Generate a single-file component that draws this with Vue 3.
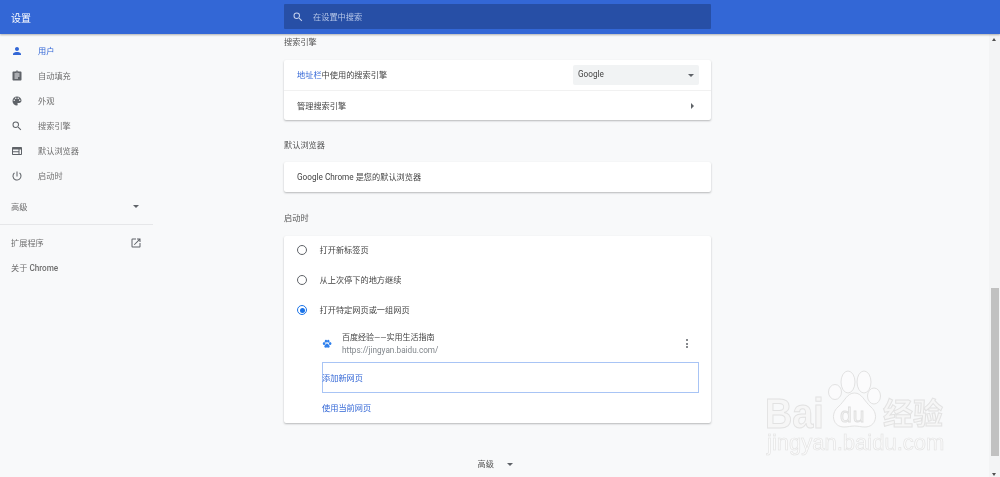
<script setup>
const nav = [
  { label: '用户', icon: 'user', active: true },
  { label: '自动填充', icon: 'clip' },
  { label: '外观', icon: 'palette' },
  { label: '搜索引擎', icon: 'search' },
  { label: '默认浏览器', icon: 'browser' },
  { label: '启动时', icon: 'power' }
]
const paths = {
  user: 'M12 12c2.2 0 4-1.8 4-4s-1.8-4-4-4-4 1.8-4 4 1.8 4 4 4zm0 2c-2.7 0-8 1.3-8 4v2h16v-2c0-2.7-5.3-4-8-4z',
  clip: 'M19 3h-4.2C14.4 1.8 13.3 1 12 1s-2.4.8-2.8 2H5c-1.1 0-2 .9-2 2v14c0 1.1.9 2 2 2h14c1.1 0 2-.9 2-2V5c0-1.1-.9-2-2-2zm-7 0c.6 0 1 .4 1 1s-.4 1-1 1-1-.4-1-1 .4-1 1-1zm2 14H7v-2h7v2zm3-4H7v-2h10v2zm0-4H7V7h10v2z',
  palette: 'M12 3a9 9 0 0 0 0 18c.8 0 1.5-.7 1.5-1.5 0-.4-.1-.7-.4-1-.2-.3-.4-.6-.4-1 0-.8.7-1.5 1.5-1.5H16c2.8 0 5-2.2 5-5 0-4.400-4-8-9-8zm-5.500 9a1.500 1.500 0 1 1 0-3 1.500 1.500 0 0 1 0 3zm3-4a1.500 1.500 0 1 1 0-3 1.500 1.500 0 0 1 0 3zm5 0a1.500 1.500 0 1 1 0-3 1.500 1.500 0 0 1 0 3zm3 4a1.500 1.500 0 1 1 0-3 1.500 1.500 0 0 1 0 3z',
  search: 'M15.500 14h-.8l-.3-.3c1-1.100 1.600-2.600 1.600-4.200A6.500 6.500 0 1 0 9.500 16c1.600 0 3.100-.6 4.200-1.600l.3.3v.8l5 5 1.500-1.500-5-5zm-6 0a4.500 4.500 0 1 1 0-9 4.500 4.500 0 0 1 0 9z',
  browser: 'M20 4H4c-1.100 0-2 .9-2 2v12c0 1.100.9 2 2 2h16c1.100 0 2-.9 2-2V6c0-1.100-.9-2-2-2zM4 9h11v3.500H4V9zm0 5.500h11V18H4v-3.500zM20 18h-3V9h3v9z',
  power: 'M13 3h-2v10h2V3zm4.800 2.200-1.400 1.400A7 7 0 0 1 19 12a7 7 0 1 1-11.400-5.400L6.200 5.200A9 9 0 1 0 21 12c0-2.700-1.200-5.200-3.200-6.800z'
}
</script>

<template>
  <div class="page">
    <header class="topbar">
      <div class="brand">设置</div>
      <div class="searchbox">
        <svg class="search-icon" viewBox="0 0 24 24"><path :d="paths.search" /></svg>
        <span class="txt">在设置中搜索</span>
      </div>
    </header>

    <div class="body">
      <aside class="side">
        <div class="nav-list">
          <div v-for="n in nav" :key="n.label" class="nav-item" :class="{ active: n.active }">
            <svg class="nav-icon" viewBox="0 0 24 24"><path :d="paths[n.icon]" /></svg>
            <span class="txt">{{ n.label }}</span>
          </div>
        </div>
        <div class="side-adv">
          <span class="txt">高级</span>
          <i class="caret"></i>
        </div>
        <div class="side-ext">
          <span class="txt">扩展程序</span>
          <svg class="ext-icon" viewBox="0 0 24 24"><path d="M19 19H5V5h7V3H5a2 2 0 0 0-2 2v14a2 2 0 0 0 2 2h14c1.100 0 2-.9 2-2v-7h-2v7zM14 3v2h3.600l-9.800 9.800 1.400 1.400L19 6.400V10h2V3h-7z" /></svg>
        </div>
        <div class="side-about">关于 <b>Chrome</b></div>
      </aside>

      <main class="main">
        <section class="column">
          <h2 class="title first">搜索引擎</h2>
          <div class="card">
            <div class="row row-split">
              <span class="txt"><a class="link">地址栏</a>中使用的搜索引擎</span>
              <div class="select"><span class="txt">Google</span><i class="caret"></i></div>
            </div>
            <div class="row row-line">
              <span class="txt">管理搜索引擎</span>
              <i class="arrow"></i>
            </div>
          </div>

          <h2 class="title">默认浏览器</h2>
          <div class="card">
            <div class="row"><span class="txt">Google Chrome 是您的默认浏览器</span></div>
          </div>

          <h2 class="title third">启动时</h2>
          <div class="card startup">
            <div class="radios">
              <label class="radio-row"><i class="radio"></i><span class="txt">打开新标签页</span></label>
              <label class="radio-row"><i class="radio"></i><span class="txt">从上次停下的地方继续</span></label>
              <label class="radio-row"><i class="radio on"></i><span class="txt">打开特定网页或一组网页</span></label>
            </div>
            <div class="sub">
              <div class="site">
                <svg class="favicon" viewBox="0 0 24 24">
                  <ellipse cx="5" cy="11" rx="3" ry="3.600" />
                  <ellipse cx="9.500" cy="5.500" rx="2.800" ry="3.500" />
                  <ellipse cx="15" cy="5.500" rx="2.800" ry="3.500" />
                  <ellipse cx="19.500" cy="11" rx="3" ry="3.600" />
                  <path d="M12 11c-3 0-3.500 3-5.500 4.500-2 1.800-.8 5.500 2.500 5.500 1.200 0 2-.4 3-.4s1.800.4 3 .4c3.300 0 4.500-3.700 2.500-5.500C15.500 14 15 11 12 11z" />
                </svg>
                <div class="site-text">
                  <div class="site-name">百度经验——实用生活指南</div>
                  <div class="site-url">https://jingyan.baidu.com/</div>
                </div>
                <div class="dots"><i></i><i></i><i></i></div>
              </div>
              <div class="add-box"><span class="txt">添加新网页</span></div>
              <div class="use-current"><span class="txt">使用当前网页</span></div>
            </div>
          </div>

          <div class="more"><span class="txt">高级</span><i class="caret"></i></div>
        </section>
      </main>

      <div class="scrollbar"><i class="sb-up"></i><div class="thumb"></div><i class="sb-arrow"></i></div>
    </div>

    <div class="watermark">
      <svg class="paw" viewBox="0 0 60 60">
        <ellipse cx="10" cy="24" rx="6.500" ry="7.500" />
        <ellipse cx="23" cy="14" rx="7" ry="11" />
        <ellipse cx="39" cy="14" rx="7" ry="11" />
        <ellipse cx="49" cy="28" rx="6.500" ry="8" />
        <path d="M29.500 25C22 25 20 33 13 39 5 46 8 59 19 59c4 0 7-1 10.500-1s6.500 1 10.500 1c11 0 14-13 6-20-7-6-9-14-16.500-14z" />
      </svg>
      <span class="wm-bai">Bai</span>
      <span class="wm-du">du</span>
      <span class="wm-cn">经验</span>
      <span class="wm-url">jingyan.baidu.com</span>
    </div>
  </div>
</template>

<style>
html, body { margin: 0; padding: 0; }
</style>

<style scoped>
.page {
  position: relative;
  width: 1000px;
  height: 477px;
  overflow: hidden;
  display: flex;
  flex-direction: column;
  background: #f8f9fa;
  font-family: "Roboto", "Noto Sans CJK SC", sans-serif;
  font-size: 8.200px;
  color: #444;
  filter: blur(0.35px);
}
.txt { position: relative; top: -1px; }
.topbar {
  height: 34px;
  flex: none;
  display: flex;
  align-items: center;
  background: #3367d6;
  box-shadow: 0 1px 2px rgba(0, 0, 0, .3);
  position: relative;
  z-index: 2;
}
.brand { width: 284px; padding-left: 11px; box-sizing: border-box; color: #fff; font-size: 10px; }
.searchbox {
  width: 427px;
  height: 25px;
  margin-top: -1px;
  display: flex;
  align-items: center;
  gap: 9px;
  padding-left: 8px;
  box-sizing: border-box;
  background: #274fa6;
  border-radius: 1px;
  color: #b6c6e8;
}
.search-icon { width: 12px; height: 12px; fill: #c5d2ee; }

.body { flex: 1; display: flex; min-height: 0; }
.side { width: 284px; flex: none; padding-top: 4px; box-sizing: border-box; color: #6f6f6f; }
.nav-item { height: 25px; display: flex; align-items: center; padding-left: 11px; gap: 15px; }
.nav-item.active { color: #3367d6; }
.nav-icon { width: 12px; height: 12px; fill: #5f6368; flex: none; }
.nav-item.active .nav-icon { fill: #3367d6; }
.side-adv {
  width: 153px;
  height: 36px;
  margin-top: 1px;
  box-sizing: border-box;
  padding: 0 14px 0 11px;
  display: flex;
  align-items: center;
  justify-content: space-between;
  border-bottom: 1px solid #e6e7e9;
}
.side-ext {
  width: 153px;
  height: 36px;
  box-sizing: border-box;
  padding: 0 11px;
  display: flex;
  align-items: center;
  justify-content: space-between;
}
.ext-icon { width: 12px; height: 12px; fill: #5f6368; }
.side-about { padding-left: 11px; line-height: 11px; margin-top: 2px; }
.side-about b { font-weight: 500; }
.caret {
  display: block;
  width: 0;
  height: 0;
  border: 3px solid transparent;
  border-top: 3.500px solid #5f6368;
  border-bottom: 0;
}

.main { flex: 1; min-width: 0; }
.column { width: 427px; }
.title {
  margin: 0;
  height: 25px;
  padding-top: 17px;
  line-height: 17px;
  font-size: 8.200px;
  font-weight: 400;
  color: #555;
}
.title.first { padding-top: 0; height: 26px; }
.title.third { padding-top: 18px; height: 26px; }
.card {
  background: #fff;
  border-radius: 2px;
  box-shadow: 0 1px 2px rgba(60, 64, 67, .35);
}
.row {
  height: 30px;
  padding: 0 13px;
  display: flex;
  align-items: center;
  color: #444;
}
.row-split { justify-content: space-between; }
.row-line { border-top: 1px solid #f1f1f1; justify-content: space-between; box-sizing: border-box; }
.link { color: #3367d6; }
.select {
  width: 126px;
  height: 20px;
  margin-right: -1px;
  padding: 0 5px;
  box-sizing: border-box;
  display: flex;
  align-items: center;
  justify-content: space-between;
  background: #f1f3f4;
  border-radius: 2px;
}
.arrow {
  display: block;
  margin-right: 4px;
  width: 0;
  height: 0;
  border: 3px solid transparent;
  border-left: 3.500px solid #5f6368;
  border-right: 0;
}
.startup { height: 187px; }
.radios { margin-top: -1px; }
.card.startup { padding-top: .1px; box-sizing: border-box; }
.radio-row {
  height: 30px;
  display: flex;
  align-items: center;
  gap: 12.500px;
  padding-left: 13px;
  color: #444;
}
.radio {
  width: 8px;
  height: 8px;
  box-sizing: content-box;
  border: 1.300px solid #5f6368;
  border-radius: 50%;
  background: #fff;
  position: relative;
  flex: none;
}
.radio.on { border-color: #1a73e8; }
.radio.on::after {
  content: "";
  position: absolute;
  inset: 1.500px;
  border-radius: 50%;
  background: #1a73e8;
}
.sub { padding: 0 12px 0 38px; }
.site { height: 37px; display: flex; align-items: center; }
.favicon { width: 10px; height: 10px; fill: #2f80ed; margin-right: 10px; flex: none; }
.site-text { flex: 1; line-height: 13px; }
.site-name { color: #444; font-size: 8px; }
.site-url { color: #80868b; font-size: 8.200px; }
.dots { display: flex; flex-direction: column; gap: 1.500px; margin-right: 11px; }
.dots i { width: 2px; height: 2px; background: #5f6368; border-radius: 50%; }
.add-box {
  height: 31px;
  box-sizing: border-box;
  display: flex;
  align-items: center;
  border: 1px solid #a8c4f5;
  color: #3367d6;
}
.add-box .txt { margin-left: -1px; }
.use-current { height: 30px; display: flex; align-items: center; color: #3367d6; }
.more {
  display: flex;
  align-items: center;
  justify-content: center;
  gap: 13.600px;
  margin-top: 31px;
  height: 20px;
  padding-right: 4px;
  color: #555;
}

.scrollbar {
  width: 11px;
  flex: none;
  background: #f3f4f5;
  position: relative;
}
.thumb { position: absolute; left: 2px; right: 1px; top: 254px; height: 168px; background: #c1c1c1; }
.sb-arrow {
  position: absolute;
  left: 3px;
  bottom: 1px;
  border: 2.500px solid transparent;
  border-top: 3px solid #505050;
  border-bottom: 0;
}
.sb-up {
  position: absolute;
  left: 3px;
  top: 4px;
  border: 2.500px solid transparent;
  border-bottom: 3px solid #505050;
  border-top: 0;
}

.watermark { position: absolute; left: 765px; top: 368px; width: 215px; height: 90px; }
.paw { position: absolute; left: 60px; top: 0; width: 60px; height: 60px; fill: #fbfbfc; stroke: #e2e2e2; stroke-width: 1; }
.wm-bai { position: absolute; left: 0; top: 30px; font: 700 43px/30px "Liberation Sans", sans-serif; color: #f6f6f6; -webkit-text-stroke: 1px #e2e2e2; transform: scaleX(.88); transform-origin: left center; }
.wm-du { position: absolute; left: 75px; top: 37px; font: 400 21px/20px "Liberation Sans", sans-serif; letter-spacing: 1px; color: #f2f2f2; -webkit-text-stroke: .8px #dedede; }
.wm-cn { position: absolute; left: 118px; top: 27px; font: 700 30px/32px "Noto Sans CJK SC", sans-serif; color: #f6f6f6; -webkit-text-stroke: 1px #e2e2e2; }
.wm-url { position: absolute; left: 2px; top: 63px; font: 400 22px/24px "Liberation Sans", sans-serif; color: #fbfbfb; -webkit-text-stroke: .6px #e2e2e2; }
</style>
